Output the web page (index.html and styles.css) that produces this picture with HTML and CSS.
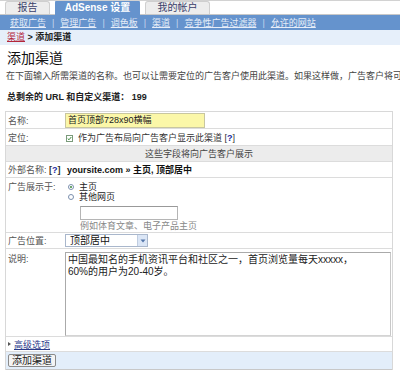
FILE: index.html
```html
<!DOCTYPE html>
<html>
<head>
<meta charset="utf-8">
<link rel="stylesheet" href="styles.css">
</head>
<body>
<div class="tabs">
  <div class="tab t1">报告</div>
  <div class="tab active">AdSense 设置</div>
  <div class="tab t3">我的帐户</div>
</div>
<div class="nav">
  <a>获取广告</a><span class="sep">|</span><a>管理广告</a><span class="sep">|</span><a>调色板</a><span class="sep">|</span><a>渠道</a><span class="sep">|</span><a>竞争性广告过滤器</a><span class="sep">|</span><a>允许的网站</a>
</div>
<div class="crumb"><a>渠道</a> <b>&gt; 添加渠道</b></div>
<h1>添加渠道</h1>
<p class="desc">在下面输入所需渠道的名称。也可以让需要定位的广告客户使用此渠道。如果这样做，广告客户将可以</p>
<p class="total">总剩余的 URL 和自定义渠道： 199</p>
<div class="form">
  <div class="row r-name">
    <div class="label">名称:</div>
    <div class="val"><div class="name-input">首页顶部728x90横幅</div></div>
  </div>
  <div class="row r-target">
    <div class="label">定位:</div>
    <div class="val"><span class="check">
      <svg width="7" height="7" viewBox="0 0 7 7"><rect x="0.5" y="0.5" width="6" height="6" fill="#fff" stroke="#7a9a7a"/><path d="M1.7 3.5 L3 4.8 L5.3 2" fill="none" stroke="#3a8a3a" stroke-width="1"/></svg>
    </span>作为广告布局向广告客户显示此渠道 <span class="help">[<b>?</b>]</span></div>
  </div>
  <div class="row r-gray">这些字段将向广告客户展示</div>
  <div class="row r-ext">
    <div class="label">外部名称: <span class="help2">[<b>?</b>]</span></div>
    <div class="val ext">yoursite.com » 主页, 顶部居中</div>
  </div>
  <div class="row r-show">
    <div class="label">广告展示于:</div>
    <div class="val">
      <div class="radio-line"><span class="radio on"></span>主页</div>
      <div class="radio-line"><span class="radio"></span>其他网页</div>
      <div class="other-input"></div>
      <div class="hint">例如体育文章、电子产品主页</div>
    </div>
  </div>
  <div class="row r-pos">
    <div class="label">广告位置:</div>
    <div class="val"><div class="select"><span>顶部居中</span><span class="arrow"><svg width="6" height="4" viewBox="0 0 6 4"><path d="M0.5 0.5 L3 3.5 L5.5 0.5" fill="#5577aa"/></svg></span></div></div>
  </div>
  <div class="row r-desc">
    <div class="label">说明:</div>
    <div class="val"><div class="textarea"><div class="tl">中国最知名的手机资讯平台和社区之一，首页浏览量每天xxxxx，</div><div class="tl">60%的用户为20-40岁。</div></div></div>
  </div>
  <div class="row r-adv"><span class="tri"></span><a>高级选项</a></div>
  <div class="row r-btn"><span class="btn">添加渠道</span></div>
</div>
</body>
</html>
```

FILE: styles.css
```css
* { box-sizing: border-box; }
html, body { margin: 0; padding: 0; }
body {
  width: 400px;
  height: 374px;
  overflow: hidden;
  background: #fff;
  color: #333;
  font-family: "Liberation Sans", "Noto Sans CJK SC", sans-serif;
  font-size: 9px;
  border-top: 1px solid #d2d2d2;
}
.tabs {
  display: flex;
  align-items: flex-end;
  height: 14px;
  padding-left: 5px;
  gap: 5px;
  border-bottom: 1px solid #c8c8c8;
}
.tab {
  height: 13px;
  background: #ededed;
  border: 1px solid #cfcfcf;
  border-bottom: none;
  border-radius: 3px 3px 0 0;
  font-size: 10px;
  line-height: 12px;
  text-align: center;
  color: #3a3f6a;
}
.t1 { width: 45px; }
.t3 { width: 65px; }
.tab.active {
  width: 85px;
  height: 15px;
  margin-bottom: -1px;
  background: #6593cd;
  border-color: #6593cd;
  color: #fff;
  font-weight: bold;
  line-height: 14px;
}
.nav {
  display: flex;
  align-items: center;
  height: 15px;
  background: #6593cd;
  padding-left: 10px;
  color: #dbe5f4;
  font-size: 9px;
  white-space: nowrap;
}
.nav a { text-decoration: underline; color: #e6edf8; }
.nav .sep { padding: 0 6px; color: #c9d7ee; }
.crumb {
  height: 15px;
  background: #e6effa;
  padding-left: 7px;
  font-size: 9px;
  line-height: 15px;
  color: #222;
}
.crumb a { color: #b3263a; text-decoration: underline; }
.crumb b { font-weight: bold; }
h1 {
  margin: 1px 0 0 7px;
  font-size: 14px;
  font-weight: normal;
  line-height: 22px;
  color: #111;
  font-family: "Noto Sans CJK SC", sans-serif;
}
.desc {
  margin: 1px 0 0 6px;
  line-height: 14px;
  white-space: nowrap;
  color: #444;
  font-size: 9px;
}
.total {
  margin: 7px 0 7px 7px;
  line-height: 14px;
  font-weight: bold;
  color: #222;
  font-size: 9px;
}
.form {
  margin-left: 5px;
  width: 388px;
  border-top: 1px solid #d8d8d8;
  border-left: 1px solid #d8d8d8;
  border-right: 1px solid #d8d8d8;
}
.row {
  display: flex;
  border-bottom: 1px solid #dcdcdc;
}
.label {
  width: 59px;
  flex: none;
  padding-left: 2px;
  color: #555;
  font-size: 9px;
  white-space: nowrap;
}
.val { flex: 1; min-width: 0; }
.r-name { height: 17px; align-items: center; }
.name-input {
  width: 140px;
  height: 15px;
  background: #fbf7a8;
  border: 1px solid #c8c6a0;
  padding-left: 2px;
  line-height: 13px;
  font-size: 9px;
  color: #222;
}
.r-target { height: 17px; align-items: center; }
.check { display: inline-block; vertical-align: -1px; margin: 0 5px 0 1px; }
.help { color: #333; }
.help b { color: #1a2aa0; }
.help2 { color: #333; font-weight: bold; }
.help2 b { color: #1a2aa0; }
.r-gray {
  height: 16px;
  background: #ececec;
  justify-content: center;
  align-items: center;
  color: #444;
}
.r-ext { height: 16px; align-items: center; }
.ext { font-weight: bold; color: #111; font-size: 9px; padding-left: 2px; }
.r-show { height: 55px; padding-top: 4px; }
.r-show .label { line-height: 10px; }
.radio-line { display: flex; align-items: center; height: 10px; line-height: 10px; margin-left: 3px; color: #222; }
.radio {
  width: 6px; height: 6px; border: 1px solid #7b8fae; border-radius: 50%;
  margin-right: 5px; background: #fff; position: relative;
}
.radio.on::after {
  content: ""; position: absolute; left: 1px; top: 1px; width: 2px; height: 2px; border-radius: 50%; background: #3a8a3a;
}
.other-input {
  width: 98px; height: 14px; margin: 4px 0 0 15px;
  border: 1px solid #b5b5b5; border-top-color: #999; background: #fff;
}
.hint { margin-left: 15px; color: #888; line-height: 12px; }
.r-pos { height: 16px; align-items: center; }
.select {
  display: flex; align-items: center; justify-content: space-between;
  width: 83px; height: 13px; border: 1px solid #a9b7cc; background: #fff;
  padding-left: 4px; font-size: 10px; color: #111; line-height: 11px;
}
.arrow {
  width: 10px; height: 11px; background: #dbe6f6; border-left: 1px solid #c0cde0;
  display: flex; align-items: center; justify-content: center;
}
.r-desc { height: 88px; }
.r-desc .label { padding-top: 3px; }
.textarea {
  width: 326px; height: 84px; margin-top: 3px;
  border: 1px solid #aaa; border-right-color: #c8c8c8; border-bottom-color: #d4d4d4;
  padding: 1px 2px;
  font-family: "Liberation Sans", "Noto Sans CJK SC", sans-serif;
  font-size: 10px; color: #222;
}
.tl { height: 12px; line-height: 12px; white-space: nowrap; }
.r-adv { height: 15px; align-items: center; padding-left: 2px; }
.tri {
  width: 0; height: 0; border-left: 3px solid #555; border-top: 2.5px solid transparent; border-bottom: 2.5px solid transparent;
  margin-right: 3px;
}
.r-adv a { color: #2a3a8a; text-decoration: underline; }
.r-btn { height: 18px; background: #e3eefa; align-items: center; padding-left: 2px; border-bottom: 1px solid #c8c8c8; }
.btn {
  display: inline-block; height: 13px; padding: 0 3px; line-height: 11px;
  border: 1px solid #8a8a8a; background: #f4f4f4; border-radius: 2px;
  font-size: 10px; color: #222;
}
```
